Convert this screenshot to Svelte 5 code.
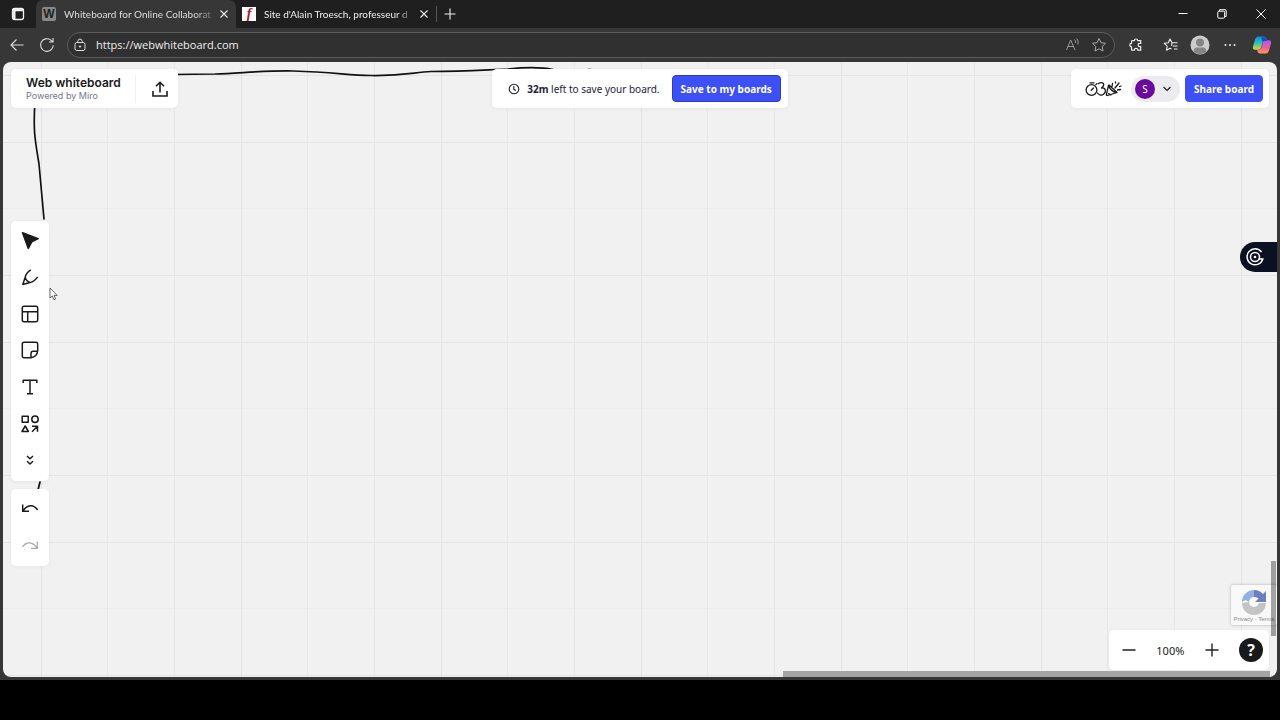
<script lang="ts">
	const tabs = [
		{ title: 'Whiteboard for Online Collaborat', icon: 'W', active: true },
		{ title: "Site d'Alain Troesch, professeur d", icon: 'f', active: false }
	]

	const tools = [
		{ name: 'Select', path: 'M2.5 1.8 18.2 7.7 11.8 10.8 8.3 17.4Z', fill: true },
		{ name: 'Pen', path: 'M10.8 2.8Q5.8 6 5.2 10.2L2.8 17.4 10 15.6Q14.8 14.2 17.6 9.8M5.2 10.2Q6 14.4 10 15.6' },
		{ name: 'Templates', path: 'M4 2.3H16Q17.7 2.3 17.7 4V16Q17.7 17.7 16 17.7H4Q2.3 17.7 2.3 16V4Q2.3 2.3 4 2.3ZM2.3 7.7H17.7M7.7 7.7V17.7' },
		{ name: 'Sticky note', path: 'M11 17.7H4Q2.3 17.7 2.3 16V4Q2.3 2.3 4 2.3H16Q17.7 2.3 17.7 4V10.5Q17.2 16.8 11 17.7ZM11 17.7V13.5Q11 11.3 13.2 11.3H17.5' },
		{ name: 'Text', path: 'M3.2 6V3.3H16.8V6M10 3.3V16.7M7 16.7H13' },
		{ name: 'Shapes', path: 'M2.2 2.2H8.2V8.2H2.2ZM18.2 5.2A3.2 3.2 0 1 1 11.8 5.2A3.2 3.2 0 1 1 18.2 5.2ZM5.2 12 2 17.5H8.4ZM12 17.7 17.5 12.3M12 12.3H17.5V17.7' },
		{ name: 'More', path: 'M7 6 10 8.7 13 6M7 11.3 10 14 13 11.3' }
	]

	let address = $state( 'https://webwhiteboard.com' )
</script>

<div class="window">
	<header class="tabbar">
		<button class="plain workspace" aria-label="Tab actions">
			<svg width="14" height="14" viewBox="0 0 14 14" fill="none" stroke="#f2f2f2" stroke-width="1.3"><rect x="1.5" y="1.5" width="11" height="11" rx="2.2" /><path d="M1.5 3H12.5M3.3 4V12" stroke-width="2.4" /></svg>
		</button>
		{#each tabs as tab}
			<div class="tab" class:active={ tab.active }>
				<span class="favicon" class:red={ !tab.active }>{ tab.icon }</span>
				<span class="title">{ tab.title }</span>
				<button class="plain close" aria-label="Close tab">
					<svg width="10" height="10" viewBox="0 0 10 10" stroke="#eee" stroke-width="1.1"><path d="M1.5 1.5 8.5 8.5M8.5 1.5 1.5 8.5" /></svg>
				</button>
			</div>
		{/each}
		<button class="plain newtab" aria-label="New tab">
			<svg width="12" height="12" viewBox="0 0 12 12" stroke="#eee" stroke-width="1.1"><path d="M6 .5V11.5M.5 6H11.5" /></svg>
		</button>
		<div class="controls">
			<button class="plain" aria-label="Minimize"><svg width="12" height="12" viewBox="0 0 12 12" stroke="#fff"><path d="M1.5 5.5H10.5" /></svg></button>
			<button class="plain" aria-label="Restore"><svg width="12" height="12" viewBox="0 0 12 12" fill="none" stroke="#fff"><rect x="1.8" y="3.2" width="6.8" height="7" rx="1" /><path d="M3.6 3V1.7H9Q10.2 1.7 10.2 3V8.5H8.8" /></svg></button>
			<button class="plain" aria-label="Close"><svg width="12" height="12" viewBox="0 0 12 12" stroke="#fff"><path d="M1.5 1.5 10.5 10.5M10.5 1.5 1.5 10.5" /></svg></button>
		</div>
	</header>

	<div class="navbar">
		<button class="plain" aria-label="Back"><svg width="16" height="16" viewBox="0 0 16 16" fill="none" stroke="#ddd" stroke-width="1.1"><path d="M14.5 8H2M7.5 2.5 2 8 7.5 13.5" /></svg></button>
		<button class="plain" aria-label="Refresh"><svg width="16" height="16" viewBox="0 0 16 16" fill="none" stroke="#ddd" stroke-width="1.1"><path d="M14.2 8.2A6.3 6.3 0 1 1 11.8 3.1L14 5M14 1V5H10" /></svg></button>
		<div class="address">
			<svg width="12" height="14" viewBox="0 0 12 14" fill="none" stroke="#ddd"><rect x="1" y="4.5" width="10" height="8" rx="1.8" /><path d="M3.8 4.5V3.3A2.2 2.2 0 0 1 8.2 3.3V4.5" /><circle cx="6" cy="8.5" r=".7" fill="#ddd" /></svg>
			<input aria-label="Address" bind:value={ address } />
			<button class="plain" aria-label="Read aloud"><svg width="16" height="16" viewBox="0 0 16 16" fill="none" stroke="#999"><path d="M1.5 13 5.7 3 10 13M3 9.5H8.5M9.5 2.5Q11 4 10.5 6M11.8 1.5Q14 4 12.8 7.5" /></svg></button>
			<button class="plain" aria-label="Add to favorites"><svg width="16" height="16" viewBox="0 0 16 16" fill="none" stroke="#aaa" stroke-linejoin="round"><path d="M8 1.5 10 5.7 14.5 6.3 11.2 9.5 12 14 8 11.9 4 14 4.8 9.5 1.5 6.3 6 5.7Z" /></svg></button>
		</div>
		<button class="plain" aria-label="Extensions"><svg width="14" height="14" viewBox="0 0 14 14" fill="none" stroke="#eee" stroke-width="1.2"><path d="M3.2 2.7H5.3A1.7 1.7 0 0 1 8.7 2.7H11.7V5.3H10.8A1.7 1.7 0 0 0 10.8 8.7H11.7V12.2H8.8A1.7 1.7 0 0 0 5.3 12.2H3.2Q2.5 12.2 2.5 11.5V8.8A1.7 1.7 0 0 1 2.5 5.4V3.5Q2.5 2.7 3.2 2.7Z" /></svg></button>
		<button class="plain fav" aria-label="Favorites"><svg width="16" height="16" viewBox="0 0 16 16" fill="none" stroke="#eee" stroke-width="1.1" stroke-linejoin="round"><path d="M9.3 5.8H14.5M10 9H14.5M11 12H14.5M8.6 9 9 5.8 7 2 5.3 5.7 1.2 6.3 4.2 9.2 3.5 13.2 7 11.3 8.5 12" /></svg></button>
		<button class="plain" aria-label="Profile"><svg width="20" height="20" viewBox="0 0 20 20"><circle cx="10" cy="10" r="9.5" fill="#ccc" /><circle cx="10" cy="7.5" r="4" fill="#858585" /><path d="M3.5 16.8Q4 12.5 7 12.5H13Q16 12.5 16.5 16.8Q10 21.5 3.5 16.8Z" fill="#858585" /></svg></button>
		<button class="plain dots" aria-label="Settings and more"><svg width="12" height="4" viewBox="0 0 12 4" fill="#eee"><circle cx="1.5" cy="2" r="1" /><circle cx="6" cy="2" r="1" /><circle cx="10.5" cy="2" r="1" /></svg></button>
		<button class="plain" aria-label="Copilot">
			<svg width="20" height="20" viewBox="0 0 20 20">
				<defs>
					<linearGradient id="cool" x1="0" y1="0" x2="0" y2="1"><stop offset="0" stop-color="#1687e8" /><stop offset=".5" stop-color="#2bc5b4" /><stop offset="1" stop-color="#e8d22c" /></linearGradient>
					<linearGradient id="warm" x1="0" y1="0" x2="0" y2="1"><stop offset="0" stop-color="#a65cf0" /><stop offset=".55" stop-color="#ee5a9c" /><stop offset="1" stop-color="#fb9a52" /></linearGradient>
				</defs>
				<path d="M6 1.5H12Q14 1.5 14.7 4L15.2 6H12.5Q11 6 10.4 8L9 13Q8.2 14.8 6 14.8H3Q.3 14.8 1 11.5L3.2 4Q4 1.5 6 1.5Z" fill="url(#cool)" />
				<path d="M14 18.5H8Q6 18.5 5.3 16L5 14.5H7.5Q9 14 9.6 12L11 7Q11.8 5.2 14 5.2H17Q19.7 5.2 19 8.5L16.8 16Q16 18.5 14 18.5Z" fill="url(#warm)" />
				<path d="M12 1.5Q14 1.5 14.7 4L15.2 6H12.5Q11.3 6 10.7 7.2L9.5 4Q9 1.5 12 1.5Z" fill="#1b4fc4" />
			</svg>
		</button>
	</div>

	<main class="board">
		<svg class="drawing" aria-hidden="true" fill="none" stroke="#111" stroke-width="1.7" stroke-linecap="round">
			<path d="M170 12.5 212 12C240 11 262 8.5 290 9C332 10 345 13.5 368 13.5C400 14 410 10.5 428 9.5C460 9.5 480 8 505 7C520 5.5 540 5.5 550 7.5" />
			<path d="M585 7.5 588 7.5" />
			<path d="M32 40C30 68 32 78 36 102L41 157M37 420 35 428" />
		</svg>

		<div class="topbar">
			<section class="card brand">
				<div>
					<h1>Web whiteboard</h1>
					<p>Powered by Miro</p>
				</div>
				<button class="plain export" aria-label="Export"><svg width="18" height="18" viewBox="0 0 18 18" fill="none" stroke="#1a1a1a" stroke-width="1.6"><path d="M2 11V16H16V11M9 12.5V2.5M5 6.2 9 2.3 13 6.2" /></svg></button>
			</section>

			<section class="card save">
				<svg width="12" height="12" viewBox="0 0 12 12" fill="none" stroke="#222" stroke-width="1.1"><circle cx="6" cy="6" r="4.8" /><path d="M5.8 3V6.3L8 7.5" /></svg>
				<p><strong>32m</strong> left to save your board.</p>
				<button class="primary">Save to my boards</button>
			</section>

			<section class="card share">
				<button class="plain" aria-label="Facilitation tools">
					<svg width="38" height="20" viewBox="0 0 38 20" fill="none" stroke="#1a1a1a" stroke-width="1.3" stroke-linecap="round" stroke-linejoin="round">
						<circle cx="7.5" cy="11" r="5.4" /><path d="M7.2 11.3 9.5 9M6 3.8H10M11.8 5.5 12.8 4.8" />
						<path d="M14 4.8C19 2 22 5.5 17.5 9C22 8.5 22.5 13 19.5 15.3C17 17 14.5 15.5 13.5 14" />
						<path d="M24.5 6.5C26 10.5 29 13 33 13.5L23.5 16.5C22.5 16.5 22 16 22.5 15ZM24.5 14.5 27 16M25 6 33 13.5M28 7.5 28.5 4.5M31 9 35 4M33.5 11 36.5 10.5M31.5 4V3M35.5 7.5 37 7" />
					</svg>
				</button>
				<button class="plain user" aria-label="Account"><span>S</span><svg width="10" height="10" viewBox="0 0 10 10" fill="none" stroke="#222" stroke-width="1.2"><path d="M1.5 3 5 6.5 8.5 3" /></svg></button>
				<button class="primary">Share board</button>
			</section>
		</div>

		<nav class="side" aria-label="Tools">
			<div class="card tools">
				{#each tools as tool}
					<button class="plain" aria-label={ tool.name }>
						<svg width="20" height="20" viewBox="0 0 20 20" fill={ tool.fill ? '#1a1a1a' : 'none' } stroke="#1a1a1a" stroke-width="1.5" stroke-linejoin="round"><path d={ tool.path } /></svg>
					</button>
				{/each}
			</div>
			<div class="card history">
				<button class="plain" aria-label="Undo"><svg width="20" height="20" viewBox="0 0 20 20" fill="none" stroke="#1a1a1a" stroke-width="1.5"><path d="M2.7 5.5V12.3H9M2.9 12.1C7 5.5 13.5 5 17.6 11" /></svg></button>
				<button class="plain" aria-label="Redo" disabled><svg width="20" height="20" viewBox="0 0 20 20" fill="none" stroke="#aaa" stroke-width="1.3"><path d="M17.3 5.5V12.3H11M17.1 12.1C13 5.5 6.5 5 2.4 11" /></svg></button>
			</div>
		</nav>

		<section class="card zoom">
			<button class="plain" aria-label="Zoom out"><svg width="16" height="16" viewBox="0 0 16 16" stroke="#222" stroke-width="1.4"><path d="M1.5 8H14.5" /></svg></button>
			<span>100%</span>
			<button class="plain" aria-label="Zoom in"><svg width="16" height="16" viewBox="0 0 16 16" stroke="#222" stroke-width="1.4"><path d="M1.5 8H14.5M8 1.5V14.5" /></svg></button>
			<button class="plain help" aria-label="Help">?</button>
		</section>

		<button class="plain assistant" aria-label="Assistant">
			<svg width="20" height="20" viewBox="0 0 20 20" fill="none" stroke="#fff" stroke-width="1.5"><path d="M16.5 5A8 8 0 1 0 17.8 12H13.5" /><circle cx="10" cy="10" r="4.5" /><circle cx="10" cy="10" r="1.3" fill="#fff" stroke="none" /></svg>
		</button>

		<aside class="captcha">
			<svg width="28" height="28" viewBox="0 0 28 28">
				<path d="M2 14A12 12 0 0 1 14 2V9A5 5 0 0 0 9 14L5.5 12Z" fill="#92b0e4" />
				<path d="M14 2A12 12 0 0 1 23 6L26 3V14H15L18.5 10.5A5 5 0 0 0 14 9Z" fill="#6b80bd" />
				<path d="M2 15L9 14A5 5 0 0 0 17 18L19 15H26A12 12 0 0 1 2 15Z" fill="#c4c4c4" />
			</svg>
			<small><a href="#privacy">Privacy</a> - <a href="#terms">Terms</a></small>
		</aside>

		<div class="vscroll"></div>
		<div class="hscroll"></div>
		<svg class="cursor" width="10" height="14" viewBox="0 0 10 14" fill="#fff" stroke="#444" stroke-width=".8" aria-hidden="true"><path d="M1 1V11L3.3 9 5 12.8 6.6 12 5 8.4H8.2Z" /></svg>
	</main>
</div>

<style>
:global(body) {
	margin: 0;
	background: #000;
}
.window {
	box-sizing: border-box;
	display: flex;
	flex-direction: column;
	min-height: 100vh;
	border-bottom: 40px solid #000;
	background: #373737;
	font-family: "Noto Sans", sans-serif;
	font-size: 10px;
	color: #1a1a1a;
}
h1, p {
	margin: 0;
}
svg {
	display: block;
	flex: none;
}
.plain {
	display: flex;
	align-items: center;
	justify-content: center;
	flex: none;
	padding: 0;
	border: 0;
	background: none;
	color: inherit;
	font: inherit;
}
.tabbar {
	display: flex;
	height: 28px;
	background: #1f1f1f;
	color: #eee;
}
.workspace {
	width: 36px;
}
.tab {
	box-sizing: border-box;
	display: flex;
	align-items: center;
	width: 200px;
	padding: 0 6px;
	border-radius: 7px 7px 0 0;
}
.active {
	background: #373737;
	color: #ddd;
}
.favicon {
	flex: none;
	width: 14px;
	height: 14px;
	margin-right: 8px;
	overflow: hidden;
	border-radius: 2px;
	background: #888;
	color: #222;
	font: bold 12px/14px "Liberation Sans", sans-serif;
	text-align: center;
}
.favicon.red {
	border-radius: 0;
	background: #fff;
	color: #b01030;
	font: italic bold 14px/14px "Liberation Serif", serif;
}
.title {
	flex: 1;
	overflow: hidden;
	font: 10px/16px Lato, sans-serif;
	white-space: nowrap;
	mask-image: linear-gradient(to right, #000 calc(100% - 20px), #0003);
}
.close {
	width: 12px;
	margin-left: 4px;
}
.newtab {
	width: 26px;
	height: 16px;
	margin-top: 6px;
	border-left: 1px solid #555;
}
.controls {
	display: flex;
	margin-left: auto;
}
.controls button {
	width: 39px;
}
.navbar {
	display: flex;
	align-items: center;
	gap: 14px;
	height: 34px;
	padding: 0 8px 0 9px;
}
.address {
	box-sizing: border-box;
	display: flex;
	align-items: center;
	flex: 1;
	gap: 10px;
	height: 26px;
	margin-left: -2px;
	padding: 0 7px 0 6px;
	border: 1px solid #5c5c5c;
	border-radius: 13px;
	background: #303030;
}
.address input {
	flex: 1;
	min-width: 0;
	padding: 0 0 2px;
	border: 0;
	outline: 0;
	background: none;
	color: #eee;
	font: 11px "Open Sans", sans-serif;
}
.fav {
	margin: 0 -3px 0 6px;
}
.dots {
	margin-right: 2px;
}
.board {
	position: relative;
	display: grid;
	grid-template-rows: auto 1fr;
	flex: 1;
	margin: 0 3px 3px;
	padding: 7px 8px;
	overflow: hidden;
	border-radius: 8px;
	background-color: #f1f1f1;
	background-image:
		linear-gradient(to right, #e4e4e4 1px, transparent 1px 66px, #e8e8e8 66px 67px, transparent 67px 133px, #e8e8e8 133px 134px, transparent 134px),
		linear-gradient(#e4e4e4 1px, transparent 1px 67px, #e4e4e4 67px 68px, transparent 68px 133px, #ececec 133px 134px, transparent 134px);
	background-position: 38px 13px;
	background-size: 200px 200px;
}
.drawing {
	position: absolute;
	top: 0;
	left: 0;
	width: 100%;
	height: 100%;
}
.card {
	position: relative;
	box-sizing: border-box;
	border-radius: 5px;
	background: #fff;
	box-shadow: 0 1px 4px #0000000d;
}
.topbar {
	display: grid;
	grid-template-columns: 1fr auto 1fr;
	align-items: start;
}
.topbar .card {
	display: flex;
	align-items: center;
	height: 39px;
}
.brand {
	justify-self: start;
	padding-left: 15px;
}
.brand div {
	padding: 0 14px 2px 0;
	border-right: 1px solid #f0f0f0;
}
h1 {
	font: 600 12px/15px Inter, sans-serif;
}
.brand p {
	color: #77778a;
	font: 9px/11px Inter, sans-serif;
}
.export {
	width: 42px;
	height: 32px;
	padding-left: 6px;
}
.save {
	padding: 0 7px 0 16px;
}
.save p {
	margin: 0 12px 0 7px;
	color: #22223a;
}
.primary {
	height: 27px;
	padding: 0 8px;
	border: 1px solid #2b3bd0;
	border-radius: 4px;
	background: #3d50f5;
	color: #fff;
	font: bold 10px "Noto Sans", sans-serif;
}
.share {
	justify-self: end;
	padding: 0 6px 0 13px;
}
.share .primary {
	border-color: #3d50f5;
}
.user {
	gap: 7px;
	height: 26px;
	margin: 0 5px 0 9px;
	padding: 0 8px 0 4px;
	border-radius: 13px;
	background: #ececf0;
}
.user span {
	width: 20px;
	border-radius: 10px;
	background: #6a0a9a;
	color: #fff;
	line-height: 20px;
}
.side {
	grid-area: 2 / 1;
	display: flex;
	flex-direction: column;
	justify-content: center;
	align-items: start;
	gap: 8px;
	padding-top: 8px;
}
.tools, .history {
	display: flex;
	flex-direction: column;
	justify-content: space-between;
	width: 38px;
	height: 260px;
	padding: 4px 3px;
}
.history {
	height: 77px;
}
.side button {
	width: 32px;
	height: 32px;
}
.zoom {
	grid-area: 2 / 1;
	place-self: end;
	display: flex;
	align-items: center;
	justify-content: space-between;
	width: 160px;
	height: 40px;
	padding: 0 6px 0 12px;
	font-size: 11px;
}
.help {
	width: 24px;
	height: 24px;
	border-radius: 12px;
	background: #1a1a1a;
	color: #fff;
	font: bold 16px "Noto Sans", sans-serif;
}
.assistant {
	position: absolute;
	top: 180px;
	right: 0;
	justify-content: start;
	width: 37px;
	height: 30px;
	padding-left: 5px;
	border-radius: 15px 0 0 15px;
	background: #0b1022;
}
.captcha {
	position: absolute;
	right: 0;
	bottom: 52px;
	display: flex;
	flex-direction: column;
	align-items: center;
	width: 46px;
	height: 40px;
	overflow: hidden;
	border-radius: 2px;
	background: #f9f9f9;
	box-shadow: 0 0 3px #aaa;
}
.captcha svg {
	margin-top: 3px;
}
.captcha small {
	color: #888;
	font: 6px/7px "Liberation Sans", sans-serif;
	white-space: nowrap;
}
.captcha a {
	color: inherit;
	text-decoration: none;
}
.vscroll {
	position: absolute;
	right: 1px;
	bottom: 41px;
	width: 5px;
	height: 75px;
	background: #00000058;
}
.hscroll {
	position: absolute;
	right: 7px;
	bottom: 0;
	width: 487px;
	height: 6px;
	background: #a4a4a4;
}
.cursor {
	position: absolute;
	top: 225px;
	left: 46px;
}
</style>
